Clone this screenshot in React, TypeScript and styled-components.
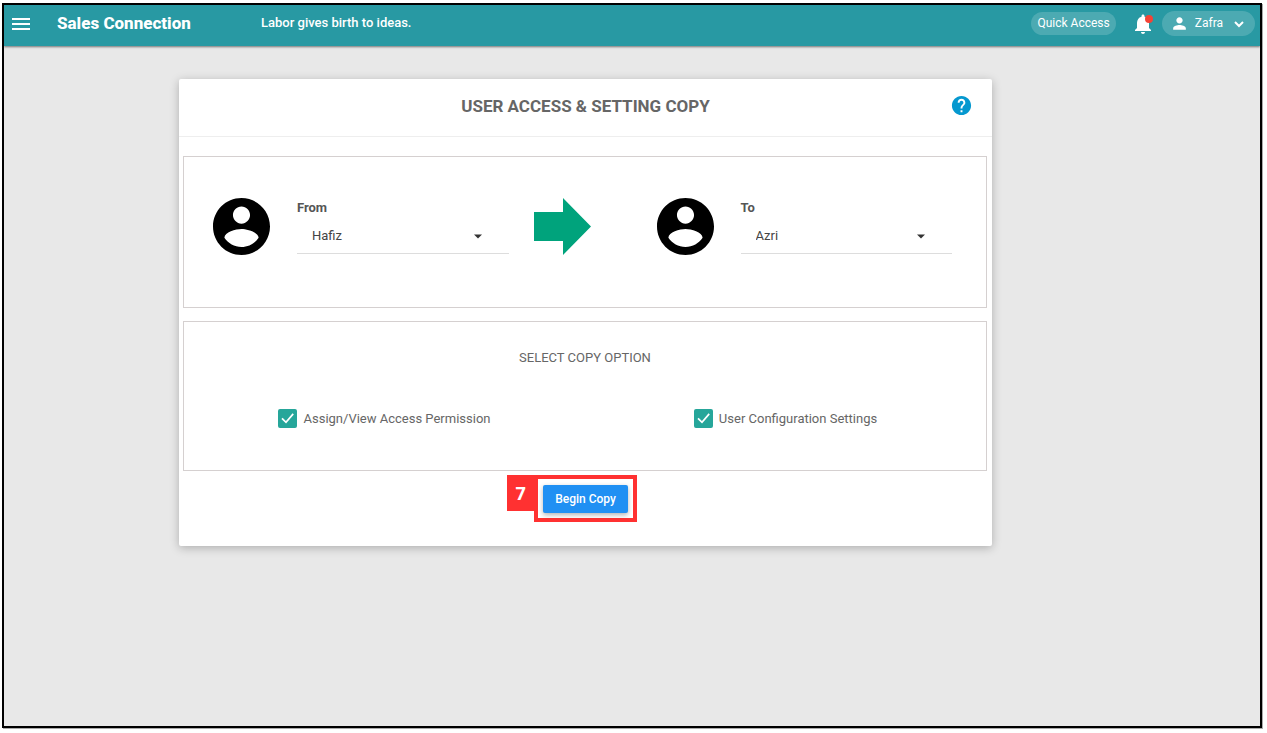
import React, { useState } from "react";
import styled, { createGlobalStyle } from "styled-components";

const GlobalStyle = createGlobalStyle`
  *, *::before, *::after { box-sizing: border-box; }
  body { margin: 0; background: #fff; font-family: Roboto, "Liberation Sans", sans-serif; color: #666; }
  button, select, input { font: inherit; color: inherit; margin: 0; }
  h1, h2 { margin: 0; }
  svg { display: block; fill: currentColor; flex: none; }
`;

const Page = styled.div`
  display: flex;
  min-height: 100vh;
  padding: 3px 5px 5px 2px;
`;

const Frame = styled.div`
  flex: 1;
  border: 2px solid #000;
  background: #e8e8e8;
  box-shadow: 1px 1px 0 #aaa;
`;

const TopBar = styled.header`
  display: flex;
  align-items: center;
  height: 41px;
  padding: 0 5px 4px;
  color: #fff;
  background: #2899a3;
  box-shadow: 0 1px 2px rgba(0, 0, 0, 0.5);
`;

const PlainButton = styled.button`
  position: relative;
  display: grid;
  place-items: center;
  padding: 0;
  border: 0;
  background: none;
  cursor: pointer;
`;

const Brand = styled.a`
  width: 204px;
  margin-left: 24px;
  padding-bottom: 2px;
  font-size: 17px;
  font-weight: 800;
  line-height: 24px;
  color: inherit;
  text-decoration: none;
`;

const Motto = styled.span`
  flex: 1;
  padding-bottom: 2px;
  font-size: 13px;
  font-weight: 500;
  line-height: 20px;
`;

const Actions = styled.div`
  display: flex;
  align-items: center;
`;

const Pill = styled.button<{ $height: number; $pad: number }>`
  display: flex;
  align-items: center;
  height: ${({ $height }) => $height}px;
  padding: 0 ${({ $pad }) => $pad}px;
  border: 0;
  border-radius: 13px;
  background: rgba(255, 255, 255, 0.17);
  font-size: 12px;
  font-weight: 400;
  line-height: 16px;
  cursor: pointer;
`;

const BellButton = styled(PlainButton)`
  margin: 0 7px 0 15px;
`;

const Dot = styled.span`
  position: absolute;
  top: 3px;
  right: 2px;
  width: 8px;
  height: 8px;
  border-radius: 50%;
  background: #f44336;
`;

const PillText = styled.span`
  padding-bottom: 2px;
`;

const UserName = styled(PillText)`
  margin: 0 8px 0 6px;
`;

const Main = styled.main`
  padding: 33px 268px 33px 175px;
`;

const Card = styled.section`
  padding-bottom: 24px;
  border-radius: 2px;
  background: #fff;
  box-shadow: 0 2px 10px rgba(0, 0, 0, 0.25);
`;

const CardHeader = styled.div`
  display: grid;
  grid-template-columns: 62px 1fr 62px;
  align-items: center;
  height: 58px;
  padding-bottom: 4px;
  border-bottom: 1px solid #eee;
`;

const CardTitle = styled.h1`
  grid-column: 2;
  font-size: 17px;
  font-weight: 700;
  line-height: 24px;
  text-align: center;
`;

const Panel = styled.section<{ $gap: number }>`
  margin: ${({ $gap }) => $gap}px 5px 0 4px;
  border: 1px solid #d5d0d0;
`;

const Transfer = styled.div`
  display: grid;
  grid-template-columns: 1fr 98px 1fr;
  gap: 25px;
  padding: 41px 34px 52px 29px;
`;

const Person = styled.div`
  display: grid;
  grid-template-columns: 57px 1fr;
  gap: 27px;
  color: #000;
`;

const Field = styled.div`
  color: #555;
`;

const FieldLabel = styled.label`
  display: block;
  font-size: 13px;
  font-weight: 700;
  line-height: 20px;
`;

const SelectBox = styled.div`
  display: grid;
  grid-template-columns: 1fr 24px 19px;
  align-items: center;
  height: 36px;
  border-bottom: 1px solid #ddd;
  color: #444;
`;

const Select = styled.select`
  grid-area: 1 / 1 / 2 / 4;
  width: 100%;
  height: 35px;
  padding: 0 40px 0 15px;
  border: 0;
  appearance: none;
  background: none;
  font-size: 13px;
`;

const Caret = styled.svg`
  grid-area: 1 / 2;
  pointer-events: none;
  color: #333;
`;

const ArrowSlot = styled.div`
  color: #00a37c;
`;

const OptionsTitle = styled.h2`
  padding-top: 26px;
  font-size: 13px;
  font-weight: 400;
  line-height: 20px;
  text-align: center;
`;

const Options = styled.div`
  display: grid;
  grid-template-columns: 1fr 1fr;
  justify-items: center;
  padding: 41px 0;
`;

const Option = styled.label`
  display: flex;
  align-items: flex-start;
  gap: 6px;
  font-size: 13px;
  line-height: 20px;
  cursor: pointer;
`;

const Tick = styled.span`
  display: grid;
  width: 19px;
  height: 19px;
  color: #fff;
  & > * { grid-area: 1 / 1; }
  svg { pointer-events: none; }
`;

const TickInput = styled.input`
  width: 19px;
  height: 19px;
  appearance: none;
  border: 2px solid #5a5a5a;
  border-radius: 2px;
  &:checked { border-color: #26a69a; background: #26a69a; }
`;

const Footer = styled.div`
  display: flex;
  justify-content: center;
  padding-top: 4px;
`;

const Highlight = styled.div`
  position: relative;
  padding: 6px 5px 5px;
  border: 4px solid #ff3131;
`;

const Step = styled.span`
  position: absolute;
  top: -4px;
  right: calc(100% + 4px);
  width: 27px;
  height: 36px;
  background: #ff3131;
  color: #fff;
  font-family: "Open Sans", sans-serif;
  font-size: 18px;
  font-weight: 700;
  line-height: 36px;
  text-align: center;
`;

const CopyButton = styled.button`
  display: block;
  height: 28px;
  padding: 0 12px;
  border: 0;
  border-radius: 2px;
  background: #2090f3;
  color: #fff;
  font-size: 12px;
  font-weight: 500;
  line-height: 28px;
  box-shadow: 0 2px 5px rgba(0, 0, 0, 0.3);
  cursor: pointer;
`;

type PersonFieldProps = { id: string; label: string; initial: string; names: string[] };

function PersonField({ id, label, initial, names }: PersonFieldProps) {
  return (
    <Person>
      <svg width="57" height="57" viewBox="2 2 20 20" aria-hidden="true">
        <path d="M12 2C6.48 2 2 6.48 2 12s4.48 10 10 10 10-4.48 10-10S17.52 2 12 2zm0 3c1.66 0 3 1.34 3 3s-1.34 3-3 3-3-1.34-3-3 1.34-3 3-3zm0 14.2c-2.5 0-4.71-1.28-6-3.22.03-1.99 4-3.08 6-3.08 1.99 0 5.97 1.09 6 3.08-1.29 1.94-3.5 3.22-6 3.22z" />
      </svg>
      <Field>
        <FieldLabel htmlFor={id}>{label}</FieldLabel>
        <SelectBox>
          <Select id={id} defaultValue={initial}>
            {names.map((name) => (
              <option key={name}>{name}</option>
            ))}
          </Select>
          <Caret width="24" height="24" viewBox="0 0 24 24" aria-hidden="true">
            <path d="M8 10.500h8l-4 4z" />
          </Caret>
        </SelectBox>
      </Field>
    </Person>
  );
}

function CopyOption({ label }: { label: string }) {
  const [checked, setChecked] = useState(true);
  return (
    <Option>
      <Tick>
        <TickInput type="checkbox" checked={checked} onChange={() => setChecked(!checked)} />
        {checked && (
          <svg width="19" height="19" viewBox="0 0 19 19" aria-hidden="true">
            <path d="M4 9.300l4 4 7.200-8.400" fill="none" stroke="currentColor" strokeWidth="1.700" />
          </svg>
        )}
      </Tick>
      {label}
    </Option>
  );
}

export default function App() {
  return (
    <Page>
      <GlobalStyle />
      <Frame>
        <TopBar>
          <PlainButton aria-label="Menu">
            <svg width="24" height="24" viewBox="0 0 24 24">
              <path d="M3 18h18v-2H3v2zm0-5h18v-2H3v2zm0-7v2h18V6H3z" />
            </svg>
          </PlainButton>
          <Brand href="#">Sales Connection</Brand>
          <Motto>Labor gives birth to ideas.</Motto>
          <Actions>
            <Pill $height={23} $pad={6}>
              <PillText>Quick Access</PillText>
            </Pill>
            <BellButton aria-label="Notifications">
              <svg width="24" height="24" viewBox="0 0 24 24">
                <path d="M12 22c1.100 0 2-.9 2-2h-4c0 1.100.89 2 2 2zm6-6v-5c0-3.070-1.640-5.640-4.500-6.320V4c0-.83-.67-1.500-1.500-1.500s-1.500.67-1.500 1.500v.68C7.630 5.360 6 7.920 6 11v5l-2 2v1h16v-1l-2-2z" />
              </svg>
              <Dot />
            </BellButton>
            <Pill $height={25} $pad={8}>
              <svg width="19" height="19" viewBox="0 0 24 24" aria-hidden="true">
                <path d="M12 12c2.210 0 4-1.790 4-4s-1.790-4-4-4-4 1.790-4 4 1.790 4 4 4zm0 2c-2.670 0-8 1.340-8 4v2h16v-2c0-2.660-5.330-4-8-4z" />
              </svg>
              <UserName>Zafra</UserName>
              <svg width="16" height="16" viewBox="0 0 16 16" aria-hidden="true">
                <path d="M4 6l4 4 4-4" fill="none" stroke="currentColor" strokeWidth="2" />
              </svg>
            </Pill>
          </Actions>
        </TopBar>
        <Main>
          <Card>
            <CardHeader>
              <CardTitle>USER ACCESS &amp; SETTING COPY</CardTitle>
              <PlainButton aria-label="Help">
                <svg width="23" height="23" viewBox="0 0 24 24" color="#0598cf">
                  <path d="M12 2C6.480 2 2 6.480 2 12s4.480 10 10 10 10-4.480 10-10S17.520 2 12 2zm1 17h-2v-2h2v2zm2.070-7.750l-.9.920C13.450 12.900 13 13.500 13 15h-2v-.5c0-1.100.45-2.100 1.170-2.830l1.240-1.260c.37-.36.59-.86.59-1.410 0-1.100-.9-2-2-2s-2 .9-2 2H8c0-2.210 1.790-4 4-4s4 1.790 4 4c0 .88-.36 1.680-.93 2.250z" />
                </svg>
              </PlainButton>
            </CardHeader>
            <Panel $gap={19}>
              <Transfer>
                <PersonField id="copy-from" label="From" initial="Hafiz" names={["Hafiz", "Azri"]} />
                <ArrowSlot>
                  <svg width="57" height="57" viewBox="0 0 57 57" aria-hidden="true">
                    <path d="M0 14h29V0l28 28.500L29 57V43H0z" />
                  </svg>
                </ArrowSlot>
                <PersonField id="copy-to" label="To" initial="Azri" names={["Hafiz", "Azri"]} />
              </Transfer>
            </Panel>
            <Panel $gap={13}>
              <OptionsTitle>SELECT COPY OPTION</OptionsTitle>
              <Options>
                <CopyOption label="Assign/View Access Permission" />
                <CopyOption label="User Configuration Settings" />
              </Options>
            </Panel>
            <Footer>
              <Highlight>
                <Step>7</Step>
                <CopyButton>Begin Copy</CopyButton>
              </Highlight>
            </Footer>
          </Card>
        </Main>
      </Frame>
    </Page>
  );
}
